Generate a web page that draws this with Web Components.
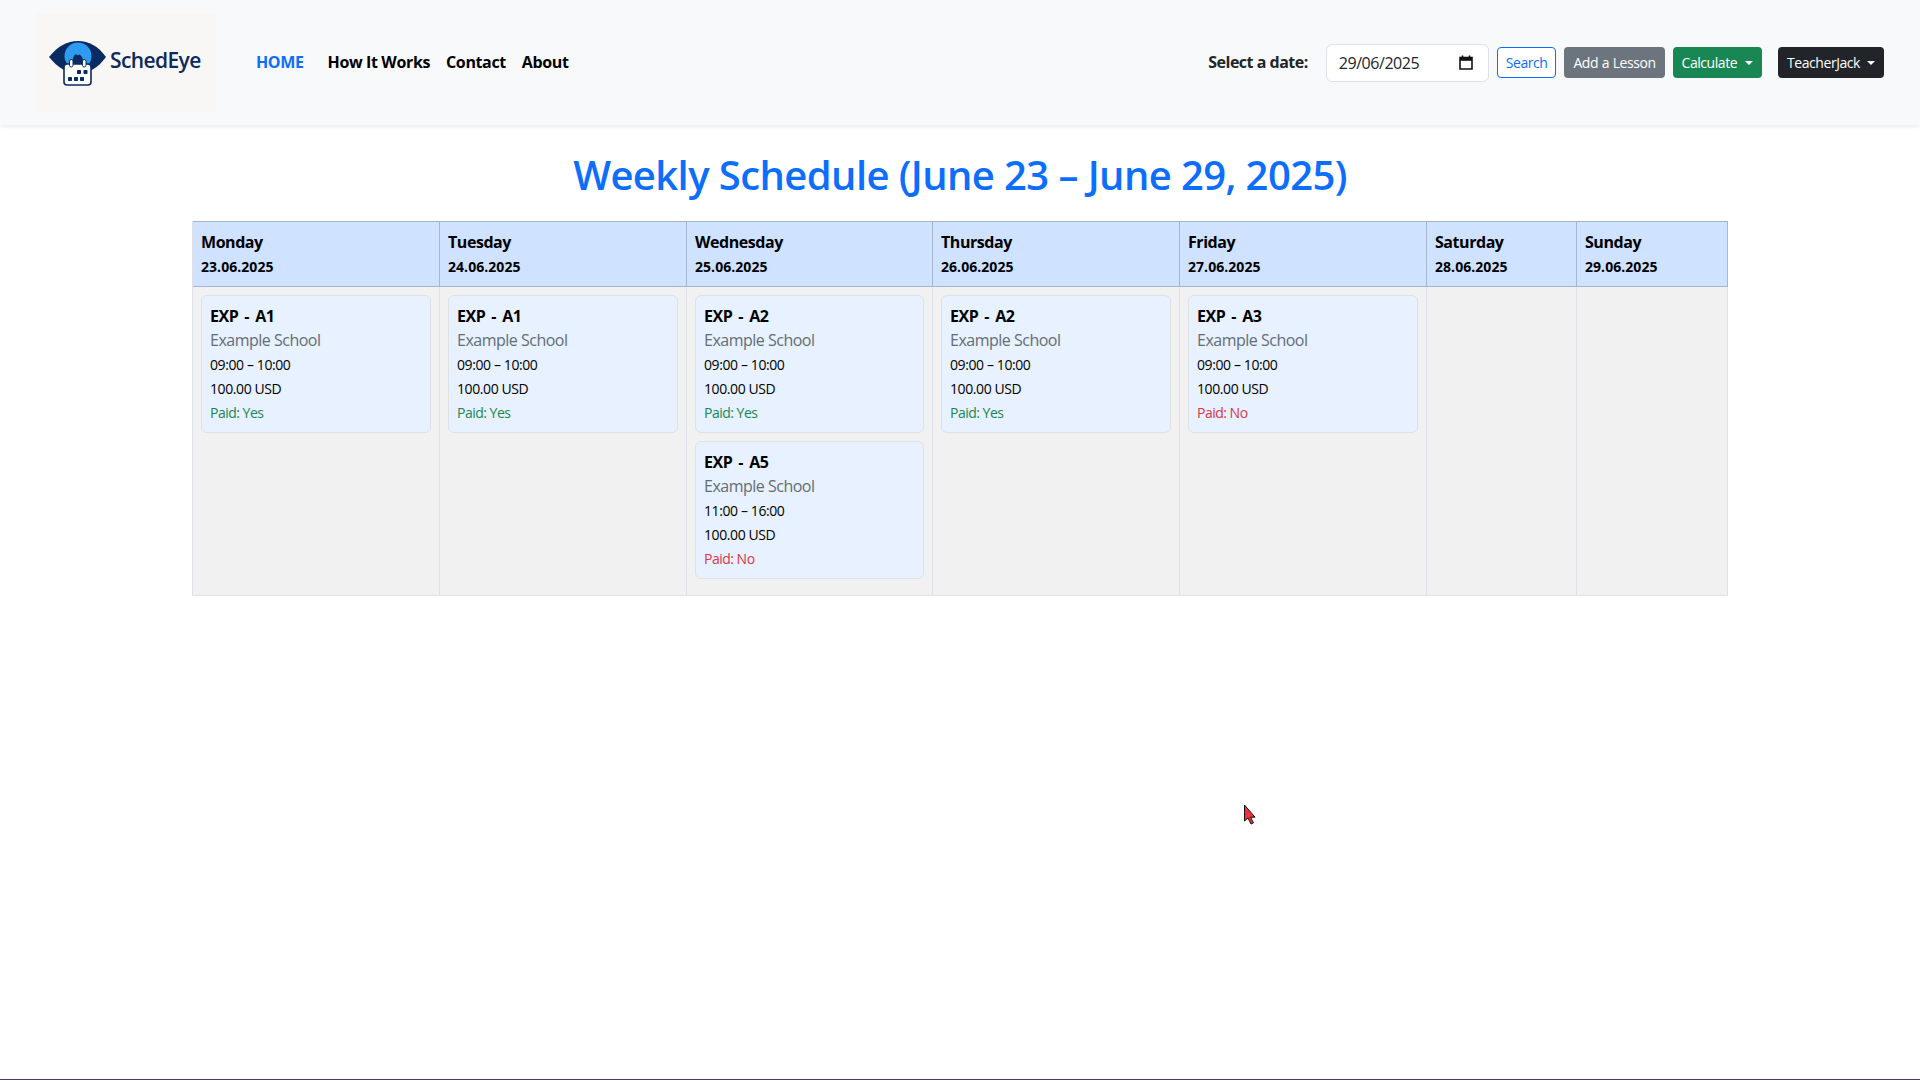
<!DOCTYPE html>
<html lang="en">
<head>
<meta charset="utf-8">
<title>SchedEye</title>
<style>
  html, body { margin: 0; height: 100%; }
  body {
    font-family: "Open Sans", "Noto Sans", sans-serif;
    color: #000;
    background: #fff;
    overflow: hidden;
  }
  #page { display: flex; flex-direction: column; height: 1080px; position: relative; }
  #bottom-line { margin-top: auto; height: 1px; background: #4a3a5e; }
  #cursor { position: absolute; left: 1243px; top: 804px; }
</style>
</head>
<body>
<div id="page">
  <app-navbar>
    <brand-logo slot="brand"></brand-logo>
    <nav-link slot="links" active style="margin-right:8px">HOME</nav-link>
    <nav-link slot="links">How It Works</nav-link>
    <nav-link slot="links">Contact</nav-link>
    <nav-link slot="links">About</nav-link>
    <date-search slot="tools"></date-search>
    <app-button slot="tools" kind="outline">Search</app-button>
    <app-button slot="tools" kind="gray" style="word-spacing:.5px">Add a Lesson</app-button>
    <app-button slot="tools" kind="green" caret>Calculate</app-button>
    <app-button slot="tools" kind="dark" caret style="margin-left:8px">TeacherJack</app-button>
  </app-navbar>
  <week-schedule heading="Weekly Schedule (June 23 – June 29, 2025)">
    <day-column name="Monday" date="23.06.2025" style="border-left:1px solid #dee2e6">
      <lesson-card code="EXP - A1" time="09:00 – 10:00" paid="Yes"></lesson-card>
    </day-column>
    <day-column name="Tuesday" date="24.06.2025">
      <lesson-card code="EXP - A1" time="09:00 – 10:00" paid="Yes"></lesson-card>
    </day-column>
    <day-column name="Wednesday" date="25.06.2025">
      <lesson-card code="EXP - A2" time="09:00 – 10:00" paid="Yes"></lesson-card>
      <lesson-card code="EXP - A5" time="11:00 – 16:00" paid="No"></lesson-card>
    </day-column>
    <day-column name="Thursday" date="26.06.2025">
      <lesson-card code="EXP - A2" time="09:00 – 10:00" paid="Yes"></lesson-card>
    </day-column>
    <day-column name="Friday" date="27.06.2025">
      <lesson-card code="EXP - A3" time="09:00 – 10:00" paid="No"></lesson-card>
    </day-column>
    <day-column name="Saturday" date="28.06.2025"></day-column>
    <day-column name="Sunday" date="29.06.2025"></day-column>
  </week-schedule>
  <div id="bottom-line"></div>
  <svg id="cursor" width="16" height="22" viewBox="0 0 16 22">
    <path d="M1.5 1v16l3.500-3 3 6 2.500-1.200-3-5.600h4.500z" fill="#f0303c" stroke="#111" stroke-width="1" stroke-linejoin="round"/>
  </svg>
</div>

<script>
class AppNavbar extends HTMLElement {
  constructor() {
    super();
    this.attachShadow({ mode: 'open' });
    this.shadowRoot.innerHTML = `
      <style>
        :host {
          display: flex;
          align-items: center;
          box-sizing: border-box;
          height: 125px;
          padding: 0 36px;
          background: #f8f9fa;
          box-shadow: 0 2px 4px rgba(0,0,0,0.075);
          position: relative;
        }
        #links { display: flex; align-items: center; gap: 16px; margin-left: 40px; }
        #tools { display: flex; align-items: center; gap: 8px; margin-left: auto; }
      </style>
      <slot name="brand"></slot>
      <div id="links"><slot name="links"></slot></div>
      <div id="tools"><slot name="tools"></slot></div>
    `;
  }
}

class BrandLogo extends HTMLElement {
  constructor() {
    super();
    this.attachShadow({ mode: 'open' });
    this.shadowRoot.innerHTML = `
      <style>
        :host {
          display: flex;
          align-items: center;
          box-sizing: border-box;
          width: 180px;
          height: 99px;
          padding-left: 12px;
          background: #f9f7f5;
        }
        svg { display: block; flex: none; }
        span {
          font-size: 21px;
          font-weight: 600;
          letter-spacing: -0.6px;
          color: #0c2a5e;
          margin: -6px 0 0 3px;
        }
      </style>
      <svg width="59" height="50" viewBox="0 0 59 50">
        <path d="M1 19C10 8 19 3 30 3s20 5 28 16c-8 11-17 16-28 16S10 30 1 19z" fill="#0a2a62"/>
        <circle cx="30" cy="18" r="13.500" fill="#2f9bf0"/>
        <path d="M25 27c-1-5 0-9 3-11 1 1.500 2 1.500 3.500.5 3 2 4 5 3.500 10.500z" fill="#0a2a62"/>
        <path d="M19 26h21a3 3 0 0 1 3 3v15a3 3 0 0 1-3 3H19a3 3 0 0 1-3-3V29a3 3 0 0 1 3-3z" fill="#fff" stroke="#0a2a62" stroke-width="1.600"/>
        <rect x="21.500" y="21.500" width="3.500" height="7.500" rx="1.700" fill="#fff" stroke="#0a2a62"/>
        <rect x="34.500" y="21.500" width="3.500" height="7.500" rx="1.700" fill="#fff" stroke="#0a2a62"/>
        <g fill="#0a2a62">
          <rect x="29" y="32" width="4" height="4" rx=".7"/>
          <rect x="35.500" y="32" width="4" height="4" rx=".7"/>
          <rect x="20" y="39" width="4" height="4" rx=".7"/>
          <rect x="26" y="39" width="4" height="4" rx=".7"/>
          <rect x="32" y="39" width="4" height="4" rx=".7"/>
        </g>
      </svg>
      <span>SchedEye</span>
    `;
  }
}

class NavLink extends HTMLElement {
  constructor() {
    super();
    this.attachShadow({ mode: 'open' });
    this.shadowRoot.innerHTML = `
      <style>
        :host {
          display: block;
          font-size: 16px;
          font-weight: 700;
          letter-spacing: -0.37px;
          color: #000;
          line-height: 23px;
          padding-bottom: 1px;
          white-space: nowrap;
        }
        :host([active]) { color: #0d6efd; }
      </style>
      <slot></slot>
    `;
  }
}

class DateSearch extends HTMLElement {
  constructor() {
    super();
    this.attachShadow({ mode: 'open' });
    this.shadowRoot.innerHTML = `
      <style>
        :host { display: flex; align-items: center; }
        label {
          font-size: 16px;
          font-weight: 700;
          letter-spacing: -0.5px;
          color: #212529;
          line-height: 23px;
          padding-bottom: 1px;
          margin-right: 18px;
          white-space: nowrap;
        }
        #field {
          display: flex;
          align-items: center;
          justify-content: space-between;
          box-sizing: border-box;
          width: 163px;
          height: 38px;
          padding: 0 15px 0 12px;
          background: #fff;
          border: 1px solid #dee2e6;
          border-radius: 6px;
          font-size: 16px;
          letter-spacing: -0.45px;
          color: #212529;
        }
        svg { display: block; }
      </style>
      <label>Select a date:</label>
      <div id="field">
        <span>29/06/2025</span>
        <svg width="14" height="15" viewBox="0 0 14 15">
          <path d="M1 2.500h12v11.500H1z" fill="none" stroke="#111" stroke-width="1.600"/>
          <path d="M1 3h12v2.800H1z" fill="#111"/>
          <path d="M3.500 .5v2M10.500 .5v2" stroke="#111" stroke-width="1.600"/>
        </svg>
      </div>
    `;
  }
}

class AppButton extends HTMLElement {
  constructor() {
    super();
    this.attachShadow({ mode: 'open' });
    this.shadowRoot.innerHTML = `
      <style>
        :host {
          display: inline-flex;
          align-items: center;
          box-sizing: border-box;
          height: 31px;
          padding: 0 8px;
          border: 1px solid transparent;
          border-radius: 4px;
          font-size: 14px;
          letter-spacing: -0.45px;
          word-spacing: 1px;
          white-space: nowrap;
        }
        :host([kind="outline"]) { color: #0d6efd; border-color: #0d6efd; background: #fff; }
        :host([kind="gray"]) { color: #fff; background: #6c757d; }
        :host([kind="green"]) { color: #fff; background: #198754; }
        :host([kind="dark"]) { color: #fff; background: #212529; }
        #caret {
          display: none;
          margin-left: 7px;
          border-top: 4.2px solid currentColor;
          border-left: 4.2px solid transparent;
          border-right: 4.2px solid transparent;
        }
        :host([caret]) #caret { display: block; }
        :host([kind="green"]) #caret { margin-left: 8px; }
      </style>
      <slot></slot><span id="caret"></span>
    `;
  }
}

class WeekSchedule extends HTMLElement {
  constructor() {
    super();
    this.attachShadow({ mode: 'open' });
    this.shadowRoot.innerHTML = `
      <style>
        :host { display: block; padding: 26px 192px 0; }
        h1 {
          margin: 0 0 22px;
          text-align: center;
          font-size: 40px;
          line-height: 48px;
          font-weight: 600;
          letter-spacing: -0.59px;
          color: #0d6efd;
        }
        #grid {
          display: grid;
          grid-template-columns: 248px 247px 246px 247px 247px 150px 151px;
        }
      </style>
      <h1></h1>
      <div id="grid"><slot></slot></div>
    `;
    this.shadowRoot.querySelector('h1').textContent = this.getAttribute('heading');
  }
}

class DayColumn extends HTMLElement {
  constructor() {
    super();
    this.attachShadow({ mode: 'open' });
    this.shadowRoot.innerHTML = `
      <style>
        :host {
          display: flex;
          flex-direction: column;
          box-sizing: border-box;
          min-height: 375px;
          background: #f1f1f1;
          border-right: 1px solid #dee2e6;
          border-bottom: 1px solid #dee2e6;
        }
        header {
          box-sizing: border-box;
          height: 66px;
          margin-right: -1px;
          padding: 8px 8px;
          background: #cfe2ff;
          border: solid #a6b5d7;
          border-width: 1px 1px 1px 0;
        }
        #name { font-size: 16px; font-weight: 700; line-height: 24px; letter-spacing: -0.45px; }
        #date { font-size: 14px; font-weight: 700; line-height: 23px; padding-top: 1px; letter-spacing: 0.05px; }
        #body { padding: 8px 8px 0; }
      </style>
      <header>
        <div id="name"></div>
        <div id="date"></div>
      </header>
      <div id="body"><slot></slot></div>
    `;
    this.shadowRoot.querySelector('#name').textContent = this.getAttribute('name');
    this.shadowRoot.querySelector('#date').textContent = this.getAttribute('date');
  }
}

class LessonCard extends HTMLElement {
  constructor() {
    super();
    this.attachShadow({ mode: 'open' });
    const paid = this.getAttribute('paid');
    this.shadowRoot.innerHTML = `
      <style>
        :host {
          display: block;
          box-sizing: border-box;
          height: 138px;
          margin-bottom: 8px;
          padding: 8px;
          background: #e7f1ff;
          border: 1px solid #dee2e6;
          border-radius: 6px;
        }
        div { font-size: 14px; line-height: 23px; padding-top: 1px; letter-spacing: -0.4px; white-space: nowrap; }
        #code { font-size: 16px; font-weight: 700; line-height: 24px; padding-top: 0; letter-spacing: -0.5px; word-spacing: 2.5px; }
        #school { font-size: 16px; line-height: 24px; padding-top: 0; letter-spacing: -0.5px; color: #646d75; }
        #paid { letter-spacing: -0.5px; }
        #paid.yes { color: #198754; }
        #paid.no { color: #dc3545; }
      </style>
      <div id="code">${this.getAttribute('code')}</div>
      <div id="school">Example School</div>
      <div>${this.getAttribute('time')}</div>
      <div>100.00 USD</div>
      <div id="paid" class="${paid === 'Yes' ? 'yes' : 'no'}">Paid: ${paid}</div>
    `;
  }
}

customElements.define('app-navbar', AppNavbar);
customElements.define('brand-logo', BrandLogo);
customElements.define('nav-link', NavLink);
customElements.define('date-search', DateSearch);
customElements.define('app-button', AppButton);
customElements.define('week-schedule', WeekSchedule);
customElements.define('day-column', DayColumn);
customElements.define('lesson-card', LessonCard);
</script>
</body>
</html>
